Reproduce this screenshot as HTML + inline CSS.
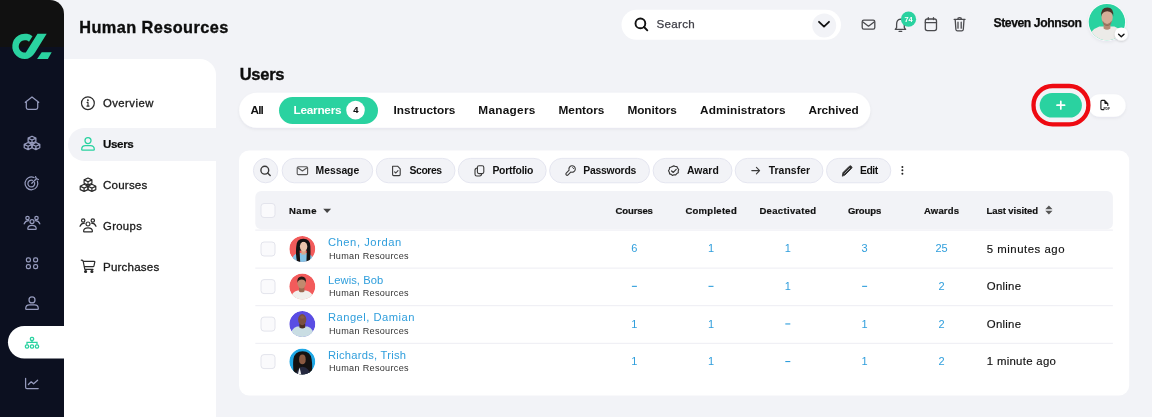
<!DOCTYPE html>
<html><head><meta charset="utf-8"><style>
html,body{margin:0;padding:0;width:1152px;height:417px;overflow:hidden;background:#f2f3f7;}
svg{display:block;will-change:transform;font-family:"Liberation Sans",sans-serif;}
</style></head><body>
<svg width="1152" height="417" viewBox="0 0 1152 417">
<defs>
  <filter id="sh" x="-10%" y="-30%" width="120%" height="170%"><feDropShadow dx="0" dy="1.5" stdDeviation="1.5" flood-color="#1a1f40" flood-opacity="0.06"/></filter>
  <filter id="sh2" x="-50%" y="-50%" width="200%" height="200%"><feDropShadow dx="0" dy="1" stdDeviation="1.2" flood-color="#000" flood-opacity="0.18"/></filter>
  <clipPath id="av0"><circle cx="302.3" cy="249" r="13"/></clipPath>
  <clipPath id="av1"><circle cx="302.3" cy="286.5" r="13"/></clipPath>
  <clipPath id="av2"><circle cx="302.3" cy="324.1" r="13"/></clipPath>
  <clipPath id="av3"><circle cx="302.3" cy="361.6" r="13"/></clipPath>
  <clipPath id="avs"><circle cx="1106.9" cy="22.1" r="18.2"/></clipPath>
</defs>
<rect x="0" y="0" width="1152" height="417" fill="#f2f3f7"/>
<!-- dark sidebar -->
<path d="M0 47 H64 V417 H0 Z" fill="#0c1020"/>
<path d="M0 0 H50 A14 14 0 0 1 64 14 V47 H0 Z" fill="#111111"/>
<!-- logo -->
<g fill="#2ad2a0">
  <path d="M37.5 33.8 L46.7 33.8 L35.06 52.48 Q30.93 59.1 24.9 59.1 A12.7 12.7 0 1 1 32.5 36.2 L29.03 41.77 A6.2 6.2 0 1 0 25.82 52.55 Z"/>
  <path d="M41.7 52.2 H51.7 L47.9 59 H37.1 Z"/>
</g>
<!-- secondary panel -->
<path d="M64 59 H200 A16 16 0 0 1 216 75 V417 H64 Z" fill="#ffffff"/>
<path d="M84.5 128 H216 V161 H84.5 A16.5 16.5 0 0 1 84.5 128 Z" fill="#f2f3f7"/>
<!-- sidebar selected -->
<path d="M24.2 326 H64 V358.5 H24.2 A16.25 16.25 0 0 1 24.2 326 Z" fill="#ffffff"/>
<!-- sidebar icons -->
<g fill="none" stroke="#969bbd" stroke-width="1.25" stroke-linecap="round" stroke-linejoin="round">
  <!-- home -->
  <path d="M25.3 102.3 L32 97 L38.7 102.3 M26.3 101.6 V107.6 Q26.3 109.3 28 109.3 H36 Q37.7 109.3 37.7 107.6 V101.6"/>
  <!-- cubes -->
  <g transform="translate(32 143)">
    <path d="M0 -6.80 L3.90 -4.90 V-1.50 L0 0.30 L-3.90 -1.50 V-4.90 Z M-3.90 -4.90 L0 -3.00 L3.90 -4.90 M0 -3.00 V0.30"/>
    <path d="M-3.9 -0.50 L0.00 1.40 V4.80 L-3.9 6.60 L-7.80 4.80 V1.40 Z M-7.80 1.40 L-3.9 3.30 L0.00 1.40 M-3.9 3.30 V6.60"/>
    <path d="M3.9 -0.50 L7.80 1.40 V4.80 L3.9 6.60 L0.00 4.80 V1.40 Z M0.00 1.40 L3.9 3.30 L7.80 1.40 M3.9 3.30 V6.60"/>
  </g>
  <!-- target -->
  <g transform="translate(31.8 183.3)">
    <path d="M5.6 -2.2 A6.4 6.4 0 1 1 2.2 -5.8"/>
    <path d="M2.8 -0.6 A3.4 3.4 0 1 1 0.6 -3.0"/>
    <path d="M0 0 L4.6 -4.6 M3.8 -6.6 L4.6 -4.6 L6.6 -3.8"/>
  </g>
  <!-- group -->
  <g transform="translate(32 223)">
    <circle cx="-4.5" cy="-5" r="1.7"/><circle cx="4.5" cy="-5" r="1.7"/><circle cx="0" cy="-1.5" r="2"/>
    <path d="M-7.8 0.8 Q-6.5 -2.3 -3.4 -2.3"/><path d="M7.8 0.8 Q6.5 -2.3 3.4 -2.3"/>
    <path d="M-4.2 5.7 Q-4.2 2.4 0 2.4 Q4.2 2.4 4.2 5.7 Q4.2 6.3 3.5 6.3 H-3.5 Q-4.2 6.3 -4.2 5.7 Z"/>
  </g>
  <!-- grid -->
  <g transform="translate(32 263.2)">
    <rect x="-5.6" y="-5.4" width="4" height="4" rx="1.6"/><rect x="1.6" y="-5.4" width="4" height="4" rx="1.6"/>
    <rect x="-5.6" y="1.4" width="4" height="4" rx="1.6"/><rect x="1.6" y="1.4" width="4" height="4" rx="1.6"/>
  </g>
  <!-- person -->
  <g transform="translate(32 303.3)">
    <circle cx="0" cy="-3.4" r="3"/>
    <path d="M-6.3 5.4 Q-6.3 1.7 -2.5 1.7 H2.5 Q6.3 1.7 6.3 5.4 Q6.3 6.2 5.5 6.2 H-5.5 Q-6.3 6.2 -6.3 5.4 Z"/>
  </g>
  <!-- chart -->
  <path d="M25.6 378.3 V387.2 Q25.6 388.6 27 388.6 H38.2 M28.4 384.5 L31.2 381.8 L33.6 383.8 L37.6 380.2"/>
</g>
<!-- org chart (selected) -->
<g fill="none" stroke="#2ad2a0" stroke-width="1.3" transform="translate(32 343)">
  <rect x="-1.6" y="-5.7" width="3.2" height="3.2" rx="1.3"/>
  <path d="M0 -2.5 V-0.6 M-5 1.6 V-0.6 H5 V1.6"/>
  <rect x="-6.6" y="1.9" width="3.2" height="3.2" rx="1.3"/>
  <rect x="-1.6" y="1.9" width="3.2" height="3.2" rx="1.3"/>
  <rect x="3.4" y="1.9" width="3.2" height="3.2" rx="1.3"/>
</g>
<!-- secondary nav icons -->
<g fill="none" stroke="#2a2a2a" stroke-width="1.2" stroke-linecap="round" stroke-linejoin="round">
  <circle cx="87.9" cy="103.2" r="6.4"/>
  <path d="M87.1 102.4 H88 V106 M86.9 106.1 H89.1" stroke-width="1.1"/><circle cx="87.9" cy="100.2" r="0.35" fill="#2a2a2a"/>
  <!-- cubes -->
  <g transform="translate(88 184.8)">
    <path d="M0 -6.80 L3.90 -4.90 V-1.50 L0 0.30 L-3.90 -1.50 V-4.90 Z M-3.90 -4.90 L0 -3.00 L3.90 -4.90 M0 -3.00 V0.30"/>
    <path d="M-3.9 -0.50 L0.00 1.40 V4.80 L-3.9 6.60 L-7.80 4.80 V1.40 Z M-7.80 1.40 L-3.9 3.30 L0.00 1.40 M-3.9 3.30 V6.60"/>
    <path d="M3.9 -0.50 L7.80 1.40 V4.80 L3.9 6.60 L0.00 4.80 V1.40 Z M0.00 1.40 L3.9 3.30 L7.80 1.40 M3.9 3.30 V6.60"/>
  </g>
  <!-- group -->
  <g transform="translate(88 225.5)">
    <circle cx="-4.8" cy="-5" r="1.7"/><circle cx="4.8" cy="-5" r="1.7"/><circle cx="0" cy="-1.5" r="2"/>
    <path d="M-8 0.8 Q-6.7 -2.3 -3.6 -2.3"/><path d="M8 0.8 Q6.7 -2.3 3.6 -2.3"/>
    <path d="M-4.4 5.7 Q-4.4 2.4 0 2.4 Q4.4 2.4 4.4 5.7 Q4.4 6.3 3.7 6.3 H-3.7 Q-4.4 6.3 -4.4 5.7 Z"/>
  </g>
  <!-- cart -->
  <path d="M81.3 260.2 Q82.8 260.2 83.2 261.3 L84.8 269.4 H93 M83.5 261.3 H94.2 Q95 261.4 94.8 262.2 L93.9 266 Q93.7 266.7 93 266.7 H84.5"/>
  <circle cx="85.6" cy="271.5" r="1" fill="#2a2a2a"/><circle cx="91.9" cy="271.5" r="1" fill="#2a2a2a"/>
</g>
<!-- users nav icon green -->
<g fill="none" stroke="#2ad2a0" stroke-width="1.3" transform="translate(88 144)">
  <circle cx="0" cy="-3.4" r="3"/>
  <path d="M-6.3 5.4 Q-6.3 1.7 -2.5 1.7 H2.5 Q6.3 1.7 6.3 5.4 Q6.3 6.2 5.5 6.2 H-5.5 Q-6.3 6.2 -6.3 5.4 Z"/>
</g>
<!-- header search -->
<rect x="621.5" y="9.8" width="219.5" height="30" rx="15" fill="#ffffff"/>
<circle cx="824.2" cy="25.5" r="12" fill="#f2f3f7"/>
<path d="M819 21.8 L824 26.6 L829 21.8" fill="none" stroke="#111" stroke-width="1.8" stroke-linecap="round" stroke-linejoin="round"/>
<g fill="none" stroke="#111" stroke-width="1.9" stroke-linecap="round">
  <circle cx="640.4" cy="23.4" r="4.9"/><path d="M644 27 L647.3 30.3"/>
</g>
<!-- header icons -->
<g fill="none" stroke="#4a4a4e" stroke-width="1.3" stroke-linejoin="round" stroke-linecap="round">
  <rect x="862.2" y="20.2" width="12.6" height="9" rx="1.6"/>
  <path d="M862.9 22 L868.5 26.2 L874.1 22"/>
  <!-- bell -->
  <path d="M895.3 29.4 H905.6 L904.3 27.6 V24.4 Q904.3 19.6 900.4 19.2 Q896.6 19.6 896.6 24.4 V27.6 Z"/>
  <path d="M899.1 31.4 H901.7"/>
  <!-- calendar -->
  <rect x="925.3" y="19" width="11.2" height="11.6" rx="2"/>
  <path d="M925.3 22.6 H936.5 M928.3 17.6 V19.6 M933.5 17.6 V19.6"/>
  <!-- trash -->
  <path d="M954.2 19.4 H965 M957.7 19.3 Q957.7 17.6 959.6 17.6 Q961.5 17.6 961.5 19.3 M955.2 19.6 L955.9 29.4 Q956.1 30.8 957.5 30.8 H961.7 Q963.1 30.8 963.3 29.4 L964 19.6 M958 22.2 V28.2 M961.2 22.2 V28.2"/>
</g>
<circle cx="908.5" cy="19.2" r="7.6" fill="#2ad2a0"/>
<text x="908.6" y="21.9" font-size="7.4" font-weight="bold" fill="#fff" text-anchor="middle">74</text>
<!-- header avatar -->
<circle cx="1106.9" cy="22.1" r="18.9" fill="#ffffff" filter="url(#sh)"/>
<circle cx="1106.9" cy="22.1" r="18.2" fill="#2ad2a0"/>
<g clip-path="url(#avs)">
  <path d="M1088 42 Q1089 30 1099.4 26.6 H1114.4 Q1124 30 1126 42 Z" fill="#ecebe8"/>
  <path d="M1103.6 22.4 H1110.4 V28.4 Q1107 31 1103.6 28.4 Z" fill="#b58a74"/>
  <ellipse cx="1107.1" cy="17.6" rx="5.6" ry="7.6" fill="#d6ae98"/>
  <path d="M1101.2 16.6 Q1100.4 7.4 1107.4 7.4 Q1114 7.4 1113.2 16.6 Q1112.6 11.4 1107.2 11.2 Q1102 11.4 1101.2 16.6 Z" fill="#4b3428"/>
  <path d="M1102.4 20.6 Q1107.1 27.6 1111.8 20.6 Q1111.4 25.8 1107.1 26 Q1102.8 25.8 1102.4 20.6 Z" fill="#6d4c3a" opacity="0.55"/>
</g>
<circle cx="1121.3" cy="34" r="6.6" fill="#ffffff" filter="url(#sh2)"/>
<path d="M1118.6 34.2 L1121.3 36.8 L1124 34.2" fill="none" stroke="#111" stroke-width="1.4" stroke-linecap="round" stroke-linejoin="round"/>
<!-- tab bar -->
<rect x="239.2" y="92.8" width="631.1" height="35" rx="17.5" fill="#ffffff" filter="url(#sh)"/>
<rect x="279" y="97" width="99" height="27" rx="13.5" fill="#2ad2a0"/>
<circle cx="355.5" cy="110.1" r="9.3" fill="#ffffff"/>
<text x="355.8" y="113.4" font-size="9.4" font-weight="bold" fill="#111" text-anchor="middle" stroke="#111" stroke-width="0.15">4</text>
<!-- pdf + add -->
<rect x="1088.6" y="94.2" width="37" height="22.6" rx="11.3" fill="#ffffff" filter="url(#sh)"/>
<g fill="none" stroke="#1a1a1a" stroke-width="1.1" stroke-linejoin="round">
  <path d="M1104.2 109.6 H1101.9 Q1100.9 109.6 1100.9 108.6 V101.4 Q1100.9 100.4 1101.9 100.4 H1104.6 L1107.8 103.6 V106"/>
</g>
<path d="M1104.4 100.4 L1108 104 H1105.4 Q1104.4 104 1104.4 103 Z" fill="#1a1a1a"/>
<text x="1103.4" y="109.6" font-size="3.3" font-weight="bold" fill="#1a1a1a" textLength="6.6" lengthAdjust="spacingAndGlyphs">PDF</text>
<rect x="1033.5" y="86" width="54.9" height="38.3" rx="19.15" fill="none" stroke="#ee0a12" stroke-width="4.3"/>
<rect x="1039.7" y="92.9" width="42.2" height="24.6" rx="12.3" fill="#2ad2a0"/>
<path d="M1060.8 101.4 V109 M1057 105.2 H1064.6" stroke="#fff" stroke-width="1.7" stroke-linecap="round"/>
<!-- card -->
<rect x="239" y="150.5" width="890.2" height="245" rx="10" fill="#ffffff"/>
<g fill="#f2f3f7" stroke="#e2e3ee" stroke-width="0.9">
  <circle cx="265.6" cy="170.6" r="12.2"/>
  <rect x="282.1" y="158.4" width="90.6" height="24.4" rx="12.2"/>
  <rect x="376.3" y="158.4" width="78.7" height="24.4" rx="12.2"/>
  <rect x="458.3" y="158.4" width="87.9" height="24.4" rx="12.2"/>
  <rect x="549.6" y="158.4" width="99.9" height="24.4" rx="12.2"/>
  <rect x="653.1" y="158.4" width="78.9" height="24.4" rx="12.2"/>
  <rect x="735.2" y="158.4" width="87.7" height="24.4" rx="12.2"/>
  <rect x="826.5" y="158.4" width="64.3" height="24.4" rx="12.2"/>
</g>
<g fill="none" stroke="#3a3a3a" stroke-width="1.1" stroke-linecap="round" stroke-linejoin="round">
  <circle cx="264.8" cy="170.2" r="3.9" stroke-width="1.4"/><path d="M267.6 173 L270.2 175.6" stroke-width="1.4"/>
  <!-- envelope -->
  <rect x="297.2" y="166.8" width="10.4" height="7.8" rx="1.2" stroke="#555"/>
  <path d="M297.8 167.8 L302.4 171 L307 167.8" stroke="#555"/>
  <!-- scores doc -->
  <path d="M392.6 166.2 H397.6 L400.2 168.8 V174.6 Q400.2 175.6 399.2 175.6 H393.6 Q392.6 175.6 392.6 174.6 Z"/>
  <path d="M394.6 171.8 L395.8 173 L398 170.6"/>
  <!-- portfolio copy -->
  <rect x="477.4" y="165.8" width="6.4" height="7.8" rx="1.6"/>
  <path d="M477.4 168 Q475 168 475 170.2 V174.2 Q475 176 476.8 176 H479.6 Q481.6 176 481.6 173.8"/>
  <!-- key -->
  <path d="M569.12 170.14 A3.2 3.2 0 1 1 570.96 171.98 L568.07 174.87 A1.3 1.3 0 0 1 566.23 173.03 Z"/>
  <path d="M572.60 167.40 Q573.50 167.80 573.70 168.60" stroke-width="0.9"/>
  <!-- award check -->
  <path d="M673.8 165.9 L675.3 166.5 L677 166.6 L677.6 168.2 L678.7 169.5 L678.2 171.1 L678.3 172.8 L676.8 173.6 L675.7 174.9 L674 174.8 L672.5 175.5 L671.2 174.4 L669.6 173.9 L669.3 172.2 L668.5 170.8 L669.4 169.3 L669.6 167.6 L671.2 167 Z" stroke-width="1.15"/>
  <path d="M671.6 171 L673.3 172.4 L676.2 169.4" stroke-width="1.3"/>
  <!-- arrow -->
  <path d="M751.8 170.6 H759.6 M756.4 167.4 L759.6 170.6 L756.4 173.8"/>
  <!-- pencil -->
  <path d="M842.4 175.8 L843 172.6 L849.4 166.2 Q850.4 165.3 851.5 166.4 Q852.5 167.5 851.6 168.4 L845.2 174.8 Z" fill="#2a2a2a" stroke-width="1"/>
  <path d="M844.6 173.4 L849.6 168.4" stroke="#c8c8d0" stroke-width="0.7"/>
</g>
<g fill="#222"><circle cx="902.4" cy="166.9" r="1"/><circle cx="902.4" cy="170.3" r="1"/><circle cx="902.4" cy="173.7" r="1"/></g>
<!-- table header -->
<rect x="255.3" y="190.9" width="857.6" height="38.4" rx="6" fill="#f2f3f7"/>
<rect x="255.3" y="229.6" width="857.6" height="1" fill="#ededf3"/>
<rect x="261" y="203.5" width="14" height="14" rx="3" fill="#fafafc" stroke="#e3e4ec" stroke-width="1"/>
<path d="M323.2 208.7 H331.1 L327.15 213 Z" fill="#444"/>
<path d="M1045.3 209.3 L1048.9 205.4 L1052.5 209.3 Z M1045.3 210.7 H1052.5 L1048.9 214.6 Z" fill="#555"/>
<!-- avatars -->
<g clip-path="url(#av0)">
  <circle cx="302.3" cy="249" r="13" fill="#f25b5b"/>
  <path d="M291.5 263 Q292 254.6 297.5 253 H307.5 Q313 254.6 313.5 263 Z" fill="#86c3e6"/>
  <path d="M297.2 262.5 Q295.4 255 296.2 247 Q296.2 238.8 303.4 238.8 Q310.6 238.8 310.4 247 Q310.8 255 309.8 262.5 H306.4 L306.8 250.4 H299.6 L300.2 262.5 Z" fill="#151313"/>
  <path d="M301.4 249 H305.8 V254.4 H301.4 Z" fill="#d9a88e"/>
  <ellipse cx="303.6" cy="246.6" rx="3.7" ry="4.9" fill="#eac3ab"/>
  <path d="M299.7 243.6 Q300.4 239.8 303.6 239.8 Q307.2 239.8 307.6 243.8 Q305.8 241.6 303.4 241.6 Q301.2 241.6 299.7 243.6 Z" fill="#151313"/>
</g>
<g clip-path="url(#av1)">
  <circle cx="302.3" cy="286.5" r="13" fill="#f25b5b"/>
  <path d="M290 301 Q291.5 291.4 297.6 290.4 H306 Q312.6 291.4 314.6 301 Z" fill="#f1f0ed"/>
  <path d="M299 287.6 H304.4 V291.4 Q301.7 293.2 299 291.4 Z" fill="#9a6a52"/>
  <ellipse cx="301.6" cy="283.2" rx="4.2" ry="5.4" fill="#c08a6e"/>
  <path d="M297.3 283 Q296.8 276.6 301.7 276.6 Q306.6 276.6 306 283 Q305.4 279.4 301.7 279.4 Q298 279.4 297.3 283 Z" fill="#221814"/>
</g>
<g clip-path="url(#av2)">
  <circle cx="302.3" cy="324.1" r="13" fill="#5a4de3"/>
  <path d="M289.5 339 Q290.5 328.6 297 326.6 H307.6 Q314 328.6 315 339 Z" fill="#c9dde3"/>
  <path d="M299.4 323.4 H305.2 V327.6 Q302.3 329.4 299.4 327.6 Z" fill="#4a2e22"/>
  <ellipse cx="302.2" cy="319.6" rx="4.1" ry="5.6" fill="#7a5040"/>
  <ellipse cx="302.2" cy="317.2" rx="2" ry="1.6" fill="#8f6450" opacity="0.6"/>
</g>
<g clip-path="url(#av3)">
  <circle cx="302.3" cy="361.6" r="13" fill="#1fa8e6"/>
  <path d="M294 376 Q292.6 366 293.4 359 Q294.6 351.4 302.6 351.2 Q310.6 351.4 311.6 359 Q312.8 366 311.6 376 Z" fill="#141212"/>
  <path d="M295.6 376 Q297 367.6 302.4 366.8 Q309.4 367.6 311 376 Z" fill="#262a40"/>
  <path d="M299.6 367.4 L301.6 376 H297.4 Z" fill="#f2f2f2"/>
  <ellipse cx="302.4" cy="359.4" rx="3.3" ry="4.8" fill="#8a5a42"/>
</g>

<rect x="261" y="242.0" width="14" height="14" rx="3" fill="#fafafc" stroke="#e3e4ec" stroke-width="1"/>
<rect x="261" y="279.6" width="14" height="14" rx="3" fill="#fafafc" stroke="#e3e4ec" stroke-width="1"/>
<rect x="261" y="317.1" width="14" height="14" rx="3" fill="#fafafc" stroke="#e3e4ec" stroke-width="1"/>
<rect x="261" y="354.6" width="14" height="14" rx="3" fill="#fafafc" stroke="#e3e4ec" stroke-width="1"/>
<rect x="255.3" y="267.6" width="857.6" height="1" fill="#ededf3"/>
<rect x="255.3" y="305.2" width="857.6" height="1" fill="#ededf3"/>
<rect x="255.3" y="342.8" width="857.6" height="1" fill="#ededf3"/>
<text x="634.4" y="252.4" font-size="11" text-anchor="middle" fill="#2f9edc">6</text>
<text x="711.0" y="252.4" font-size="11" text-anchor="middle" fill="#2f9edc">1</text>
<text x="787.8" y="252.4" font-size="11" text-anchor="middle" fill="#2f9edc">1</text>
<text x="864.6" y="252.4" font-size="11" text-anchor="middle" fill="#2f9edc">3</text>
<text x="941.5" y="252.4" font-size="11" text-anchor="middle" fill="#2f9edc">25</text>
<rect x="631.9" y="285.8" width="5" height="1.1" fill="#2f9edc"/>
<rect x="708.5" y="285.8" width="5" height="1.1" fill="#2f9edc"/>
<text x="787.8" y="290.0" font-size="11" text-anchor="middle" fill="#2f9edc">1</text>
<rect x="862.1" y="285.8" width="5" height="1.1" fill="#2f9edc"/>
<text x="941.5" y="290.0" font-size="11" text-anchor="middle" fill="#2f9edc">2</text>
<text x="634.4" y="327.6" font-size="11" text-anchor="middle" fill="#2f9edc">1</text>
<text x="711.0" y="327.6" font-size="11" text-anchor="middle" fill="#2f9edc">1</text>
<rect x="785.3" y="323.4" width="5" height="1.1" fill="#2f9edc"/>
<text x="864.6" y="327.6" font-size="11" text-anchor="middle" fill="#2f9edc">1</text>
<text x="941.5" y="327.6" font-size="11" text-anchor="middle" fill="#2f9edc">2</text>
<text x="634.4" y="365.2" font-size="11" text-anchor="middle" fill="#2f9edc">1</text>
<text x="711.0" y="365.2" font-size="11" text-anchor="middle" fill="#2f9edc">1</text>
<rect x="785.3" y="361.0" width="5" height="1.1" fill="#2f9edc"/>
<text x="864.6" y="365.2" font-size="11" text-anchor="middle" fill="#2f9edc">1</text>
<text x="941.5" y="365.2" font-size="11" text-anchor="middle" fill="#2f9edc">2</text>
<text x="79.20" y="32.70" font-size="16.3" font-weight="bold" fill="#0d0d0d" stroke="#0d0d0d" stroke-width="0.35" textLength="149.00" lengthAdjust="spacing">Human Resources</text>
<text x="656.60" y="28.20" font-size="11.6" font-weight="normal" fill="#3d3d45" stroke="#3d3d45" stroke-width="0.25" textLength="38.20" lengthAdjust="spacing">Search</text>
<text x="993.50" y="27.30" font-size="12.2" font-weight="bold" fill="#0d0d0d" stroke="#0d0d0d" stroke-width="0.25" textLength="88.50" lengthAdjust="spacing">Steven Johnson</text>
<text x="103.00" y="107.30" font-size="11.3" font-weight="normal" fill="#1a1a1a" stroke="#1a1a1a" stroke-width="0.3" textLength="50.30" lengthAdjust="spacing">Overview</text>
<text x="103.00" y="148.10" font-size="11.6" font-weight="bold" fill="#0d0d0d" stroke="#0d0d0d" stroke-width="0.2" textLength="30.75" lengthAdjust="spacing">Users</text>
<text x="103.00" y="189.30" font-size="11.6" font-weight="normal" fill="#1a1a1a" stroke="#1a1a1a" stroke-width="0.3" textLength="44.30" lengthAdjust="spacing">Courses</text>
<text x="103.00" y="229.60" font-size="11.3" font-weight="normal" fill="#1a1a1a" stroke="#1a1a1a" stroke-width="0.3" textLength="38.80" lengthAdjust="spacing">Groups</text>
<text x="103.00" y="270.80" font-size="11.6" font-weight="normal" fill="#1a1a1a" stroke="#1a1a1a" stroke-width="0.3" textLength="56.20" lengthAdjust="spacing">Purchases</text>
<text x="239.70" y="80.10" font-size="16.5" font-weight="bold" fill="#0d0d0d" stroke="#0d0d0d" stroke-width="0.35" textLength="44.80" lengthAdjust="spacing">Users</text>
<text x="250.50" y="113.90" font-size="11.8" font-weight="bold" fill="#111" textLength="13.40" lengthAdjust="spacing">All</text>
<text x="293.40" y="113.90" font-size="11.8" font-weight="bold" fill="#ffffff" textLength="48.20" lengthAdjust="spacing">Learners</text>
<text x="393.50" y="113.90" font-size="11.8" font-weight="bold" fill="#111" textLength="61.90" lengthAdjust="spacing">Instructors</text>
<text x="478.30" y="113.90" font-size="11.8" font-weight="bold" fill="#111" textLength="57.10" lengthAdjust="spacing">Managers</text>
<text x="558.50" y="113.90" font-size="11.8" font-weight="bold" fill="#111" textLength="45.90" lengthAdjust="spacing">Mentors</text>
<text x="627.40" y="113.90" font-size="11.8" font-weight="bold" fill="#111" textLength="49.50" lengthAdjust="spacing">Monitors</text>
<text x="700.10" y="113.90" font-size="11.8" font-weight="bold" fill="#111" textLength="85.40" lengthAdjust="spacing">Administrators</text>
<text x="808.50" y="113.90" font-size="11.8" font-weight="bold" fill="#111" textLength="50.10" lengthAdjust="spacing">Archived</text>
<text x="315.60" y="173.90" font-size="10.4" font-weight="bold" fill="#111" textLength="43.60" lengthAdjust="spacing">Message</text>
<text x="409.60" y="173.90" font-size="10.4" font-weight="bold" fill="#111" textLength="32.50" lengthAdjust="spacing">Scores</text>
<text x="492.40" y="173.90" font-size="10.4" font-weight="bold" fill="#111" textLength="41.00" lengthAdjust="spacing">Portfolio</text>
<text x="583.30" y="173.90" font-size="10.4" font-weight="bold" fill="#111" textLength="53.00" lengthAdjust="spacing">Passwords</text>
<text x="686.90" y="173.90" font-size="10.4" font-weight="bold" fill="#111" textLength="31.90" lengthAdjust="spacing">Award</text>
<text x="768.70" y="173.90" font-size="10.4" font-weight="bold" fill="#111" textLength="41.30" lengthAdjust="spacing">Transfer</text>
<text x="860.00" y="173.90" font-size="10.4" font-weight="bold" fill="#111" textLength="18.10" lengthAdjust="spacing">Edit</text>
<text x="288.90" y="213.90" font-size="9.5" font-weight="bold" fill="#111" stroke="#111" stroke-width="0.2" textLength="27.70" lengthAdjust="spacing">Name</text>
<text x="615.60" y="213.90" font-size="9.5" font-weight="bold" fill="#111" stroke="#111" stroke-width="0.2" textLength="37.30" lengthAdjust="spacing">Courses</text>
<text x="685.40" y="213.90" font-size="9.5" font-weight="bold" fill="#111" stroke="#111" stroke-width="0.2" textLength="51.30" lengthAdjust="spacing">Completed</text>
<text x="759.40" y="213.90" font-size="9.5" font-weight="bold" fill="#111" stroke="#111" stroke-width="0.2" textLength="56.70" lengthAdjust="spacing">Deactivated</text>
<text x="847.90" y="213.90" font-size="9.5" font-weight="bold" fill="#111" stroke="#111" stroke-width="0.2" textLength="33.40" lengthAdjust="spacing">Groups</text>
<text x="924.00" y="213.90" font-size="9.5" font-weight="bold" fill="#111" stroke="#111" stroke-width="0.2" textLength="35.00" lengthAdjust="spacing">Awards</text>
<text x="986.50" y="213.90" font-size="9.5" font-weight="bold" fill="#111" stroke="#111" stroke-width="0.2" textLength="51.60" lengthAdjust="spacing">Last visited</text>
<text x="327.90" y="246.00" font-size="11.2" font-weight="normal" fill="#2f9edc" textLength="73.35" lengthAdjust="spacing">Chen, Jordan</text>
<text x="328.90" y="258.50" font-size="9.1" font-weight="normal" fill="#333333" textLength="79.70" lengthAdjust="spacing">Human Resources</text>
<text x="986.80" y="252.50" font-size="11.4" font-weight="normal" fill="#111111" stroke="#111111" stroke-width="0.15" textLength="77.70" lengthAdjust="spacing">5 minutes ago</text>
<text x="327.90" y="283.60" font-size="11.2" font-weight="normal" fill="#2f9edc" textLength="55.30" lengthAdjust="spacing">Lewis, Bob</text>
<text x="328.90" y="296.10" font-size="9.1" font-weight="normal" fill="#333333" textLength="79.70" lengthAdjust="spacing">Human Resources</text>
<text x="986.80" y="290.10" font-size="11.4" font-weight="normal" fill="#111111" stroke="#111111" stroke-width="0.15" textLength="34.20" lengthAdjust="spacing">Online</text>
<text x="327.90" y="321.20" font-size="11.2" font-weight="normal" fill="#2f9edc" textLength="86.60" lengthAdjust="spacing">Rangel, Damian</text>
<text x="328.90" y="333.70" font-size="9.1" font-weight="normal" fill="#333333" textLength="79.70" lengthAdjust="spacing">Human Resources</text>
<text x="986.80" y="327.70" font-size="11.4" font-weight="normal" fill="#111111" stroke="#111111" stroke-width="0.15" textLength="34.20" lengthAdjust="spacing">Online</text>
<text x="327.90" y="358.80" font-size="11.2" font-weight="normal" fill="#2f9edc" textLength="78.20" lengthAdjust="spacing">Richards, Trish</text>
<text x="328.90" y="371.30" font-size="9.1" font-weight="normal" fill="#333333" textLength="79.70" lengthAdjust="spacing">Human Resources</text>
<text x="986.80" y="365.30" font-size="11.4" font-weight="normal" fill="#111111" stroke="#111111" stroke-width="0.15" textLength="69.10" lengthAdjust="spacing">1 minute ago</text>
</svg>
</body></html>
